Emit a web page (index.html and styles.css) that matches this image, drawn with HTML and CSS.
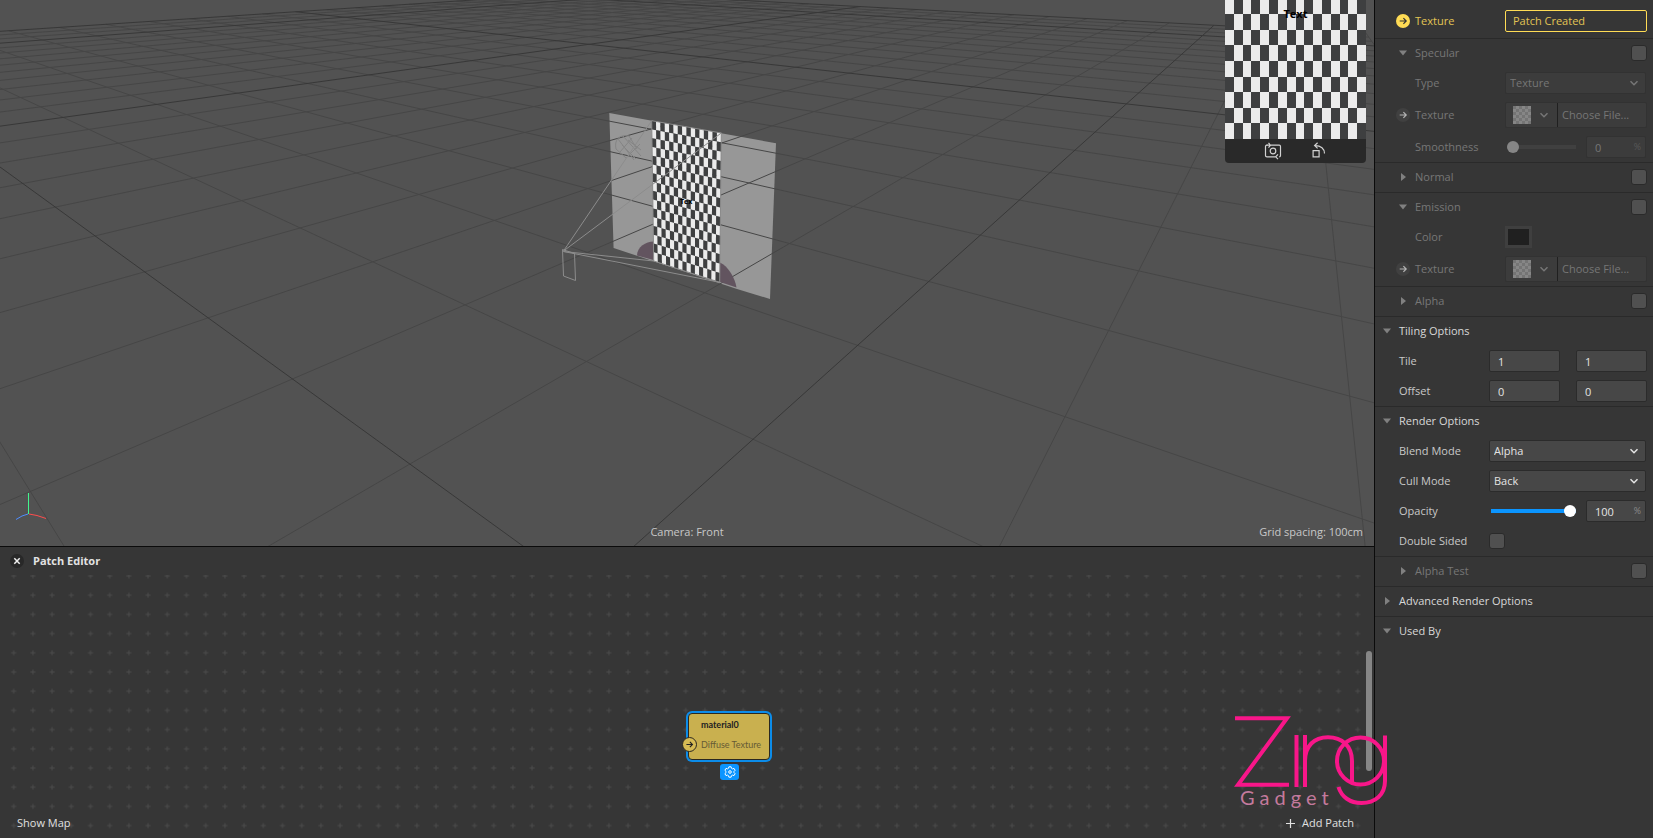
FILE: index.html
```html
<!DOCTYPE html>
<html lang="en">
<head>
<meta charset="utf-8">
<title>Patch Editor</title>
<link rel="stylesheet" href="styles.css">
</head>
<body>
<svg class="defs" aria-hidden="true">
  <symbol id="chevron" viewBox="0 0 10 10"><path d="M1.5 3.2 5 6.7 8.5 3.2" fill="none" stroke="currentColor" stroke-width="1.5"/></symbol>
  <symbol id="down" viewBox="0 0 10 10"><path d="M1 2.5h8L5 7.5z" fill="currentColor"/></symbol>
  <symbol id="right" viewBox="0 0 10 10"><path d="M3 1v8l5-4z" fill="currentColor"/></symbol>
  <symbol id="arrow" viewBox="0 0 14 14"><path d="M3.7 7h6.4M7.4 4.2 10.2 7 7.4 9.8" fill="none" stroke="currentColor" stroke-width="1.2"/></symbol>
</svg>
<div class="app">
  <main class="stage">
    <section class="viewport" aria-label="Scene">
      <svg class="scene" viewBox="0 0 1374 546" preserveAspectRatio="xMidYMid slice" aria-hidden="true">
        <path class="plane" d="M609.3 113 776 143.3 770 299 737 289 613.6 248z"/>
        <g id="grid"></g>
        <path class="blob" d="M653.5 241.5C646 241.5 637 247 637 255.5L653.5 260z"/>
        <path class="blob" d="M720 262.5C728 266 735 278 736.5 287.5L720 282z"/>
        <g class="scribble">
          <path d="M616 149C614 140 619 134 629 136L637 149M616 149 626 158M618 139 634 160M623 136 641 156M620 152 632 138M628 140 641 150M626 158 640 144M622 145 636 159"/>
        </g>
        <g id="board"></g>
        <path class="board-edge" d="M651.7 120.7 721.3 133 719.7 282.3 653.7 261z"/>
        <text class="board-text" x="680" y="204">Tex</text>
        <path class="frustum" d="M563.5 251 651.7 120.7M563.5 251 721.3 133M563.5 251.5 653.7 261M563.5 251.5 719.7 282.3M562.5 249.5 574.5 253.5 575.5 280.5 563.5 276z"/>
        <path class="axis-y" d="M28.5 493v21"/>
        <path class="axis-x" d="M29 514l8 1.5 9 3"/>
        <path class="axis-z" d="M28 514l-6 2-6 3.500"/>
      </svg>
      <div class="preview">
        <svg class="preview-screen" viewBox="0 7.1 16 8.9" preserveAspectRatio="none" aria-hidden="true">
          <g id="preview-board"></g>
        </svg>
        <span class="preview-text">Text</span>
        <div class="preview-bar">
          <button type="button" aria-label="Switch camera">
            <svg width="18" height="18" viewBox="0 0 18 18"><g fill="none" stroke="currentColor" stroke-width="1.200"><path d="M7 3.200h8.200q1.300 0 1.300 1.300v9q0 1.300-1.300 1.300M3.500 3.200H3q-1.500 0-1.500 1.300v9q0 1.300 1.500 1.300h8.500"/><path d="M2.500 3.200H6M4.500.8 6.500 3.200 4.500 5.600M14 12.400l-2.300 2.400 2.300 2.400"/><circle cx="9" cy="9" r="2.800"/></g></svg>
          </button>
          <button type="button" aria-label="Rotate device">
            <svg width="18" height="18" viewBox="0 0 18 18"><g fill="none" stroke="currentColor" stroke-width="1.200"><path d="M3.100 8.600h6v6.200h-6zM14.500 11.500C14.500 6.500 11 3.600 5 3.600M7.600.8 4.600 3.600l3 2.800"/></g></svg>
          </button>
        </div>
      </div>
      <span class="camera-name">Camera: Front</span>
      <span class="grid-spacing">Grid spacing: 100cm</span>
    </section>

    <section class="patches" aria-label="Patch Editor">
      <header class="patches-head">
        <button class="close" type="button" aria-label="Close"><svg width="14" height="14" viewBox="0 0 14 14"><path d="M4.300 4.300l5.400 5.400M9.700 4.300 4.300 9.700" stroke="currentColor" stroke-width="1.500"/></svg></button>
        <h1>Patch Editor</h1>
      </header>
      <div class="canvas">
        <svg class="dots" width="100%" height="100%" aria-hidden="true">
          <defs><pattern id="plus" width="19.200" height="19.200" x="4.100" y="-8.600" patternUnits="userSpaceOnUse"><path d="M7.100 9.600h5M9.600 7.100v5" stroke="#4b4b4b" stroke-width="1"/></pattern></defs>
          <rect width="100%" height="100%" fill="url(#plus)"/>
        </svg>
        <div class="node">
          <strong>material0</strong>
          <span>Diffuse Texture</span>
          <i class="port"><svg width="14" height="14"><use href="#arrow"/></svg></i>
        </div>
        <button class="gear" type="button" aria-label="Patch settings">
          <svg width="12" height="12" viewBox="0 0 12 12"><g fill="none" stroke="#fff" stroke-width="1"><path d="M4.900.8h2.200l.4 1.500 1 .6 1.500-.5 1.100 1.900L10 5.400v1.200l1.100 1.100L10 9.600l-1.500-.5-1 .6-.4 1.500H4.900l-.4-1.500-1-.6-1.500.5L.9 7.700 2 6.600V5.400L.9 4.300 2 2.400l1.500.5 1-.6z"/><circle cx="6" cy="6" r="1.300"/></g></svg>
        </button>
        <div class="scroll-thumb"></div>
        <div class="canvas-foot">
          <button type="button">Show Map</button>
          <button type="button" class="add"><svg width="9" height="9" viewBox="0 0 9 9"><path d="M0 4.500h9M4.500 0v9" stroke="currentColor" stroke-width="1.200"/></svg>Add Patch</button>
        </div>
      </div>
    </section>
  </main>

  <aside class="inspector">
    <div class="row nested first">
      <span class="link on"><svg width="14" height="14"><use href="#arrow"/></svg></span>
      <label for="tex0">Texture</label>
      <button id="tex0" type="button" class="patch-created">Patch Created</button>
    </div>

    <div class="off">
      <div class="head nested"><button type="button"><svg width="10" height="10"><use href="#down"/></svg>Specular</button><input type="checkbox" aria-label="Specular"></div>
      <div class="row nested"><label for="type">Type</label><span class="select"><select id="type"><option>Texture</option></select><svg width="10" height="10"><use href="#chevron"/></svg></span></div>
      <div class="row nested tall">
        <span class="link"><svg width="14" height="14"><use href="#arrow"/></svg></span>
        <label for="tex1">Texture</label>
        <div class="file"><button type="button" class="thumb" aria-label="Texture preview"><i></i><svg width="10" height="10"><use href="#chevron"/></svg></button><button id="tex1" type="button">Choose File...</button></div>
      </div>
      <div class="row nested"><label for="smooth">Smoothness</label><input id="smooth" type="range" min="0" max="100" value="0"><span class="unit"><input type="text" value="0" aria-label="Smoothness percent"><span>%</span></span></div>

      <div class="head nested"><button type="button"><svg width="10" height="10"><use href="#right"/></svg>Normal</button><input type="checkbox" aria-label="Normal"></div>

      <div class="head nested"><button type="button"><svg width="10" height="10"><use href="#down"/></svg>Emission</button><input type="checkbox" aria-label="Emission"></div>
      <div class="row nested"><label for="color">Color</label><button id="color" type="button" class="swatch"></button></div>
      <div class="row nested tall">
        <span class="link"><svg width="14" height="14"><use href="#arrow"/></svg></span>
        <label for="tex2">Texture</label>
        <div class="file"><button type="button" class="thumb" aria-label="Texture preview"><i></i><svg width="10" height="10"><use href="#chevron"/></svg></button><button id="tex2" type="button">Choose File...</button></div>
      </div>

      <div class="head nested"><button type="button"><svg width="10" height="10"><use href="#right"/></svg>Alpha</button><input type="checkbox" aria-label="Alpha"></div>
    </div>

    <div class="head"><button type="button"><svg width="10" height="10"><use href="#down"/></svg>Tiling Options</button></div>
    <div class="row"><label for="tile">Tile</label><span class="pair"><input id="tile" type="text" value="1"><input type="text" value="1" aria-label="Tile V"></span></div>
    <div class="row"><label for="offset">Offset</label><span class="pair"><input id="offset" type="text" value="0"><input type="text" value="0" aria-label="Offset V"></span></div>

    <div class="head"><button type="button"><svg width="10" height="10"><use href="#down"/></svg>Render Options</button></div>
    <div class="row"><label for="blend">Blend Mode</label><span class="select"><select id="blend"><option>Alpha</option></select><svg width="10" height="10"><use href="#chevron"/></svg></span></div>
    <div class="row"><label for="cull">Cull Mode</label><span class="select"><select id="cull"><option>Back</option></select><svg width="10" height="10"><use href="#chevron"/></svg></span></div>
    <div class="row"><label for="opacity">Opacity</label><input id="opacity" type="range" min="0" max="100" value="100"><span class="unit"><input type="text" value="100" aria-label="Opacity percent"><span>%</span></span></div>
    <div class="row"><label for="double">Double Sided</label><input id="double" type="checkbox"></div>

    <div class="off">
      <div class="head nested"><button type="button"><svg width="10" height="10"><use href="#right"/></svg>Alpha Test</button><input type="checkbox" aria-label="Alpha Test"></div>
    </div>
    <div class="head"><button type="button"><svg width="10" height="10"><use href="#right"/></svg>Advanced Render Options</button></div>
    <div class="head"><button type="button"><svg width="10" height="10"><use href="#down"/></svg>Used By</button></div>
  </aside>

  <div class="brand">
    <svg width="156" height="92" viewBox="0 0 156 92" aria-hidden="true">
      <g fill="none" stroke="#f81689" stroke-width="4"><path d="M1 4.300h52L4 70.700h51" stroke-miterlimit="10"/><path d="M62.500 21v52M71 21v52M71 47C71 32 80 23.300 94 23.300S118 32 118 47V70"/><circle cx="126.500" cy="47" r="23.500"/><path d="M151 21.500V67C151 81 141 89 127.500 89 116 89 107.500 83 104.500 73"/></g>
    </svg>
    <span>Gadget</span>
  </div>
</div>
<script src="scene.js"></script>
</body>
</html>
```
FILE: styles.css
```css
* { box-sizing: border-box; }
html, body { height: 100%; }
body {
  margin: 0;
  overflow: hidden;
  background: #363636;
  color: #c8c8c8;
  font: 11px/16px "Open Sans", "Noto Sans", sans-serif;
}
button, input, select { font: inherit; color: inherit; }
button { margin: 0; padding: 0; border: 0; background: none; text-align: left; }
svg { display: block; flex: none; }
.defs { position: absolute; width: 0; height: 0; }

.app { position: relative; display: flex; height: 100%; }
.stage { flex: 1; min-width: 0; display: grid; grid-template-rows: minmax(0, 1fr) 292px; }

/* 3D scene */
.viewport { position: relative; overflow: hidden; background: #525252; }
.scene { width: 100%; height: 100%; }
.plane { fill: #979797; }
.line { stroke: #464646; stroke-width: 1; }
.line.major { stroke: #383838; }
.light { fill: #ebebeb; }
.dark { fill: #3e3f40; }
.blob { fill: #62545f; }
.scribble { fill: none; stroke: #858585; stroke-width: 1; }
.board-edge { fill: none; stroke: #8a8a8a; }
.board-text { font: 700 7px "Open Sans", sans-serif; fill: #000; }
.frustum { fill: none; stroke: #8c8c8c; stroke-width: 1; }
.axis-x, .axis-y, .axis-z { fill: none; stroke-width: 1; }
.axis-x { stroke: #ff4d4d; }
.axis-y { stroke: #42f58d; }
.axis-z { stroke: #4d8dff; }
.preview {
  position: absolute; top: 0; right: 8px; width: 141px;
  border-radius: 0 0 4px 4px; overflow: hidden; background: #292929;
}
.preview-screen { width: 100%; height: 139px; shape-rendering: crispEdges; }
.preview-text { position: absolute; top: 6px; left: 0; width: 100%; text-align: center; color: #000; font-weight: 700; }
.preview-bar { display: flex; justify-content: center; gap: 28px; height: 24px; align-items: center; color: #d2d2d2; }
.camera-name, .grid-spacing { position: absolute; bottom: 6px; }
.camera-name { left: 0; width: 100%; text-align: center; }
.grid-spacing { right: 11px; }

/* Patch editor */
.patches { display: flex; flex-direction: column; border-top: 1px solid #0b0b0b; min-height: 0; }
.patches-head { display: flex; align-items: center; gap: 9px; height: 28px; padding-left: 10px; }
.patches-head h1 { margin: 0; font-size: 11px; font-weight: 700; color: #e2e2e2; }
.close { width: 14px; height: 14px; border-radius: 50%; background: #282828; color: #f0f0f0; }
.canvas { position: relative; flex: 1; min-height: 0; overflow: hidden; }
.dots { position: absolute; inset: 0; }
.node {
  position: absolute; left: 688px; top: 138px; width: 82px; height: 47px;
  display: flex; flex-direction: column; gap: 4px; padding: 3px 0 0 12px;
  border: 1px solid #2b2820; border-radius: 4px; background: #c9b04f;
  box-shadow: 0 0 0 2px #0c8ce9; color: #665b35; font-family: Lato, sans-serif; font-size: 9px;
}
.node strong { color: #222; }
.port { position: absolute; left: -7px; top: 23px; width: 15px; height: 15px; border: 1px solid #2b2820; border-radius: 50%; background: #d6bb54; color: #222; }
.port svg { width: 13px; height: 13px; }
.gear { position: absolute; left: 720px; top: 189px; width: 19px; height: 16px; border-radius: 3px; background: #0b95ff; display: grid; place-items: center; }
.scroll-thumb { position: absolute; right: 2px; top: 76px; width: 6px; height: 120px; border-radius: 3px; background: #868686; }
.canvas-foot { position: absolute; left: 17px; right: 20px; bottom: 7px; display: flex; justify-content: space-between; color: #e0e0e0; }
.add { display: flex; align-items: center; gap: 7px; }

/* Inspector */
.inspector { flex: none; width: 279px; border-left: 1px solid #0b0b0b; background: #363636; }
.row { position: relative; display: flex; align-items: center; height: 30px; padding: 0 6px 0 24px; }
.row.nested { padding-left: 40px; }
.row.tall { height: 34px; }
.row.first { height: 38px; padding-top: 4px; }
.row label { flex: none; width: 90px; }
.head { display: flex; align-items: center; justify-content: space-between; height: 30px; padding: 0 6px 1px 7px; border-top: 1px solid #2a2a2a; color: #d8d8d8; }
.head.nested { padding-left: 23px; }
.head button { display: flex; align-items: center; gap: 7px; }
.head button svg { color: #808080; }
.off, .off .head { color: #767676; }
.link { position: absolute; left: 21px; width: 14px; height: 14px; border-radius: 50%; background: #404040; color: #b5b5b5; }
.link.on { background: #ffdc55; color: #333; }
.first { color: #e2c454; }
.patch-created { flex: 1; height: 22px; padding: 0 7px; border: 1px solid #ffdc55; border-radius: 2px; }

input[type="text"], .unit, .select { height: 22px; border: 1px solid #2b2b2b; border-radius: 2px; background: #474747; color: #e4e4e4; }
input[type="text"] { width: 100%; min-width: 0; padding: 0 8px; outline: 0; }
.select { display: flex; align-items: center; flex: 1; margin-right: 1px; padding-right: 6px; }
.select select { flex: 1; min-width: 0; height: 20px; padding: 0 4px; border: 0; background: none; appearance: none; outline: 0; }
.pair { flex: 1; display: grid; grid-template-columns: 1fr 1fr; gap: 16px; }
.unit { display: flex; align-items: center; flex: none; width: 60px; margin: 0 1px 0 8px; padding-right: 4px; }
.unit input[type="text"] { border: 0; height: 20px; background: none; }
.unit span { color: #8a8a8a; font-family: Lato, sans-serif; font-size: 9px; }
.off .unit, .off .select, .off .unit input { color: inherit; }
.off .unit, .off .select { background: #3c3c3c; border-color: #323232; }
.off .unit span { color: #585858; }

input[type="checkbox"] { appearance: none; flex: none; width: 16px; height: 16px; margin: 0; border: 1px solid #2a2a2a; border-radius: 3px; background: #505050; }
input[type="range"] { appearance: none; flex: 1; min-width: 0; height: 14px; margin: 0 2px; border-radius: 2px; background: linear-gradient(#0b95ff, #0b95ff) 0 50% / 100% 4px no-repeat; }
.off input[type="range"] { background-image: linear-gradient(#404040, #404040); }
input[type="range"]::-webkit-slider-thumb { appearance: none; width: 12px; height: 12px; border-radius: 50%; background: #fff; }
.off input[type="range"]::-webkit-slider-thumb { background: #868686; }

.file { flex: 1; display: flex; height: 26px; border: 1px solid #323232; border-radius: 2px; background: #3c3c3c; }
.file button { padding-left: 4px; }
.file .thumb { display: flex; align-items: center; gap: 8px; width: 52px; padding-left: 7px; border-right: 1px solid #202020; }
.thumb i { width: 18px; height: 18px; background: repeating-conic-gradient(#868686 0 25%, #747474 0 50%) 0 0 / 6px 6px; }
.swatch { width: 27px; height: 22px; border: 3px solid #3f3f3f; background: #202020; }

/* Wordmark laid over the panels */
.brand { position: absolute; right: 263px; bottom: 32px; width: 156px; height: 92px; pointer-events: none; }
.brand span { position: absolute; left: 6px; bottom: -3px; color: #c47a9d; font: 20px/24px Lato, sans-serif; letter-spacing: 5px; }
```
FILE: scene.js
```javascript
const NS = "http://www.w3.org/2000/svg";
const add = (parent, name, attrs) => {
  const el = document.createElementNS(NS, name);
  for (const key in attrs) el.setAttribute(key, attrs[key]);
  parent.appendChild(el);
};

// Ground grid: camera depth and projection of the ground point (a, b).
const EXTENT = 13;
const depth = (a, b) => 1 - 0.03751 * a - 0.04711 * b;
const project = (a, b) => {
  const d = depth(a, b);
  return [(589 + 11.49 * a - 61.4 * b) / d, -55 + 99.3 / d];
};

function gridLine(point, major) {
  let end = EXTENT;
  while (depth(...point(end)) < 0.08) end -= 0.1;
  const [x1, y1] = project(...point(-EXTENT));
  const [x2, y2] = project(...point(end));
  add(document.getElementById("grid"), "line", {
    x1, y1, x2, y2, class: major ? "line major" : "line"
  });
}

for (const wanted of [false, true]) {
  for (let n = -EXTENT; n <= EXTENT; n++) {
    const major = n % 10 === 0 || n === -EXTENT;
    if (major !== wanted) continue;
    gridLine(t => [n, t], major);
    gridLine(t => [t, n], major);
  }
}

// 16 x 16 checkerboard, drawn flat in the preview and in perspective in the scene.
const shade = (col, row) => ((col + row) % 2 ? "light" : "dark");
const lerp = (p, q, t) => p + (q - p) * t;
const corner = (col, row) => {
  const u = col / 16, v = row / 16;
  const x = lerp(lerp(651.7, 721.3, u), lerp(653.7, 719.7, u), v);
  const y = lerp(lerp(120.7, 133, u), lerp(261, 282.3, u), v);
  return x + "," + y;
};

for (let row = 0; row < 16; row++) {
  for (let col = 0; col < 16; col++) {
    add(document.getElementById("board"), "polygon", {
      points: [corner(col, row), corner(col + 1, row), corner(col + 1, row + 1), corner(col, row + 1)].join(" "),
      class: shade(col, row)
    });
    add(document.getElementById("preview-board"), "rect", {
      x: col, y: row, width: 1, height: 1, class: shade(col, row)
    });
  }
}
```
